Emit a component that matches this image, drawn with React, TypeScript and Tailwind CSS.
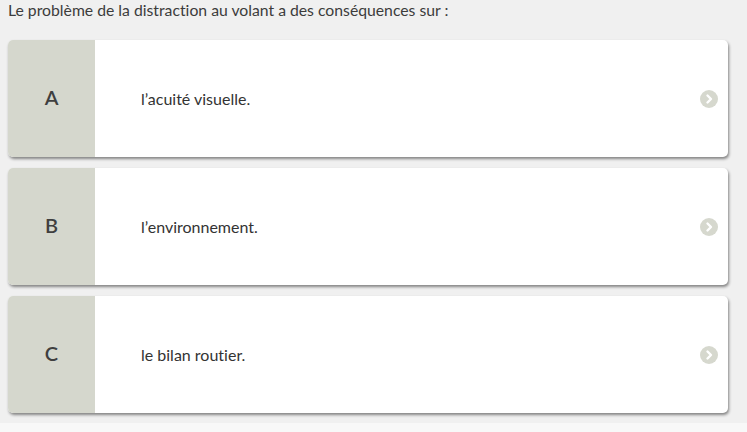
const options = [
  { letter: 'A', text: 'l’acuité visuelle.' },
  { letter: 'B', text: 'l’environnement.' },
  { letter: 'C', text: 'le bilan routier.' },
]

function Chevron() {
  return (
    <svg width="18" height="18" viewBox="0 0 18 18" className="shrink-0">
      <circle cx="9" cy="9" r="9" fill="#d6d8ce" />
      <path d="M7.5 5.5 L11 9 L7.5 12.5" fill="none" stroke="#ffffff" strokeWidth="2.4" strokeLinecap="round" strokeLinejoin="round" />
    </svg>
  )
}

export default function App() {
  return (
    <div className="min-h-[432px] bg-[#f8f8f8] font-['Lato','Liberation_Sans',sans-serif] [font-variant-ligatures:none]">
      <div className="bg-[#f0f0f0] pl-[8px] pr-[19px] pb-[10px]">
        <p className="h-[40px] text-[15.75px] leading-[19px] text-[#3c3c3c]">
          Le problème de la distraction au volant a des conséquences sur :
        </p>
        <div className="flex flex-col gap-[11px]">
          {options.map((o) => (
            <div
              key={o.letter}
              className="flex h-[117px] items-stretch overflow-hidden rounded-[5px] bg-white shadow-[1px_2px_3px_rgba(0,0,0,0.45)]"
            >
              <div className="flex w-[87px] shrink-0 items-center justify-center bg-[#d5d7cd] pb-[3px] text-[20px] font-semibold text-[#3f3f3f]">
                {o.letter}
              </div>
              <div className="flex flex-1 items-center pl-[46px] pr-[10px]">
                <span className="flex-1 text-[16px] text-[#333]">{o.text}</span>
                <Chevron />
              </div>
            </div>
          ))}
        </div>
      </div>
    </div>
  )
}
